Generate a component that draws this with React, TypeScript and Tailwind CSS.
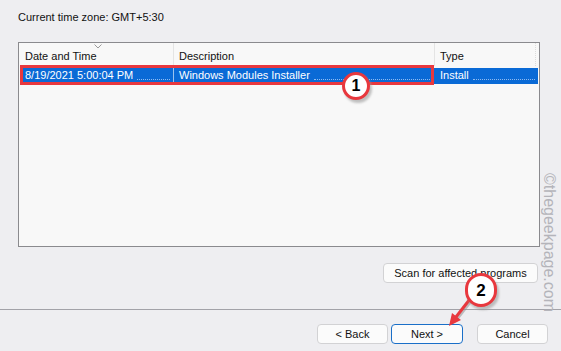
import React from "react";

export default function App() {
  const font = { fontFamily: '"Liberation Sans", Arial, sans-serif' };
  return (
    <div
      className="relative w-[561px] h-[351px] overflow-hidden bg-[#eeeef1] text-[11px] text-[#111] flex flex-col"
      style={font}
    >
      <div className="pl-[18px] pt-[10px] leading-[14px]">Current time zone: GMT+5:30</div>

      {/* table */}
      <div className="ml-[18px] mt-[18px] w-[522px] h-[205px] border border-[#8a8a8e] bg-[#f8f8f8] flex flex-col">
        <div className="relative h-[23px] flex items-center leading-[14px]">
          <div className="w-[155px] h-full flex items-center pl-[6px] pt-[2px] border-r border-[#e4e4e4]">Date and Time</div>
          <div className="w-[261px] h-full flex items-center pl-[5px] pt-[2px] border-r border-[#e4e4e4]">Description</div>
          <div className="w-[101px] h-full flex items-center pl-[5px] pt-[2px] border-r border-dotted border-[#dcdcdc]">Type</div>
          <svg className="absolute left-[75px] top-[1px]" width="8" height="5" viewBox="0 0 8 5">
            <path d="M0.5 0.5 L4 4 L7.5 0.5" fill="none" stroke="#9a9a9a" strokeWidth="1" />
          </svg>
        </div>
        <div className="mt-[2px] ml-[2px] mr-[1px] h-[16px] bg-[#0a6ad6] text-white flex items-center leading-[14px]">
          <div className="w-[153px] h-full flex items-end pb-[2px] pl-[4px] border-r border-[#9cc3ee]">
            <span>8/19/2021 5:00:04 PM</span>
            <span className="flex-1 ml-[4px] mr-[3px] mb-[2px] border-b border-dotted border-[#8fbaf0]" />
          </div>
          <div className="w-[261px] h-full flex items-end pb-[2px] pl-[5px]">
            <span>Windows Modules Installer</span>
            <span className="flex-1 ml-[4px] mr-[3px] mb-[2px] border-b border-dotted border-[#8fbaf0]" />
          </div>
          <div className="flex-1 h-full flex items-end pb-[2px] pl-[5px]">
            <span>Install</span>
            <span className="flex-1 ml-[4px] mr-[3px] mb-[2px] border-b border-dotted border-[#8fbaf0]" />
          </div>
        </div>
      </div>

      <div className="mt-[16px] flex justify-end pr-[23px]">
        <div className="w-[155px] h-[20px] rounded-[4px] border border-[#d2d2d4] bg-[#fbfbfb] flex items-center justify-center leading-[14px]">
          Scan for affected programs
        </div>
      </div>

      <div className="mt-[26px] h-px bg-[#a2a2a8]" />

      <div className="mt-[14px] flex justify-end pr-[13px] leading-[14px]">
        <div className="w-[71px] h-[20px] rounded-[4px] border border-[#d2d2d4] bg-[#fbfbfb] flex items-center justify-center">
          &lt; Back
        </div>
        <div className="ml-[3px] w-[72px] h-[20px] rounded-[4px] border border-[#1a6fc8] bg-[#fbfbfb] flex items-center justify-center">
          Next &gt;
        </div>
        <div className="ml-[14px] w-[71px] h-[20px] rounded-[4px] border border-[#d2d2d4] bg-[#fbfbfb] flex items-center justify-center">
          Cancel
        </div>
      </div>

      {/* annotations */}
      <div className="absolute left-[20px] top-[65px] w-[414px] h-[20px] border-[3px] border-[#e8383e]" />

      <div className="absolute left-[344px] top-[75px] w-[28px] h-[28px] rounded-full bg-[#9a9a9a] opacity-60 blur-[1px]" />
      <div className="absolute left-[342px] top-[72px] w-[28px] h-[28px] rounded-full border-[3px] border-[#e8383e] bg-white flex items-center justify-center text-[16px] font-bold text-black leading-none">
        1
      </div>

      <svg className="absolute left-[440px] top-[295px]" width="40" height="40" viewBox="0 0 40 40">
        <line x1="31" y1="6" x2="17" y2="24" stroke="#8a8a8a" strokeWidth="3" opacity="0.5" />
        <line x1="30" y1="4" x2="16" y2="22" stroke="#e8383e" strokeWidth="3" />
        <path d="M9 31 L12 18 L21 25 Z" fill="#e8383e" />
      </svg>

      <div className="absolute left-[467px] top-[276px] w-[32px] h-[34px] rounded-full bg-[#9a9a9a] opacity-60 blur-[1px]" />
      <div className="absolute left-[465px] top-[273px] w-[32px] h-[34px] rounded-full border-[3px] border-[#e8383e] bg-white flex items-center justify-center text-[17px] font-bold text-black leading-none">
        2
      </div>

      <div
        className="absolute left-[541px] top-[173px] text-[16px] text-[#b4b4ba] leading-none whitespace-nowrap origin-top-left"
        style={{ transform: "rotate(90deg) translateY(-16px)", fontFamily: '"Liberation Sans", Arial, sans-serif' }}
      >
        ©thegeekpage.com
      </div>
    </div>
  );
}
